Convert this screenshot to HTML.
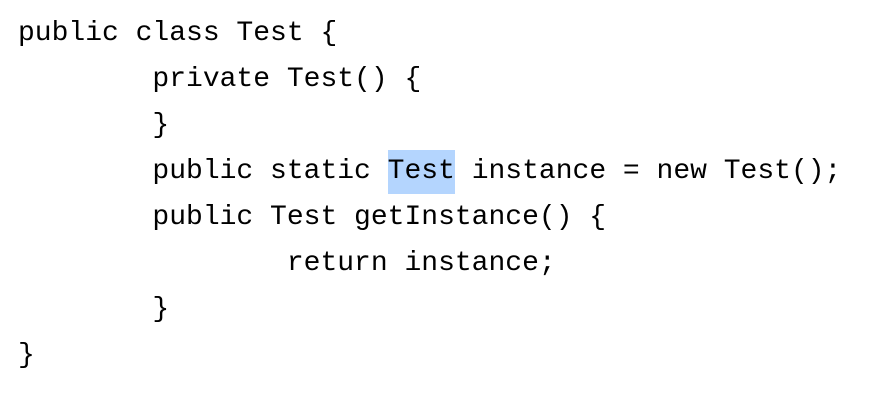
<!DOCTYPE html>
<html><head><meta charset="utf-8"><style>
html,body{margin:0;padding:0;background:#fff;width:892px;height:420px;overflow:hidden}
pre{margin:0;position:absolute;left:18px;top:11px;font-family:"Liberation Mono",monospace;font-size:28px;line-height:46px;color:#000}
.hl{background:#b4d5fe;display:inline-block;line-height:44px}
</style></head><body>
<pre>public class Test {
        private Test() {
        }
        public static <span class="hl">Test</span> instance = new Test();
        public Test getInstance() {
                return instance;
        }
}</pre>
</body></html>
